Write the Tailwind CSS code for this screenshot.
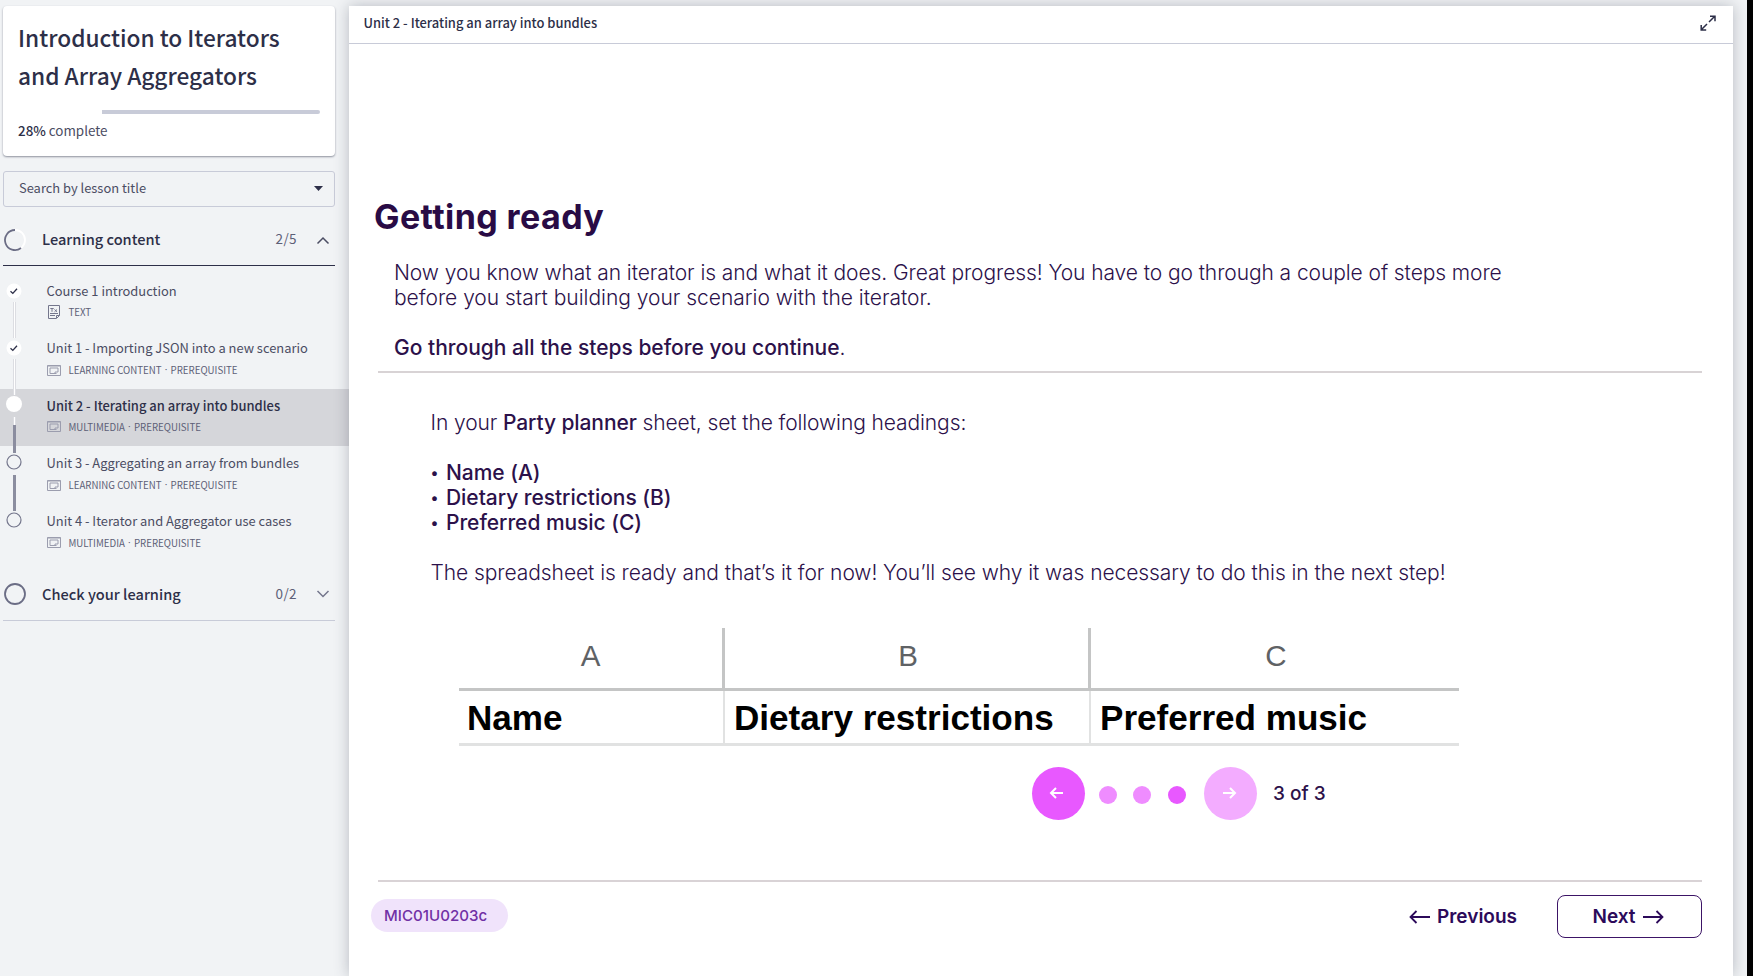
<!DOCTYPE html>
<html lang="en">
<head>
<meta charset="utf-8">
<title>Introduction to Iterators and Array Aggregators</title>
<script src="https://cdn.jsdelivr.net/npm/@tailwindcss/browser@4"></script>
</head>
<body class="flex h-[976px] w-[1753px] overflow-hidden bg-[#f1f3f5] font-['Noto_Sans_CJK_SC',sans-serif] text-[#2d2f48]">

<aside class="w-[349px] shrink-0 pt-1.5">
  <section class="ml-[3px] h-[150px] w-[332px] rounded-[4px] bg-white pt-[13px] pl-[15px] shadow-[0_1px_2px_rgba(60,65,85,0.55)]">
    <h1 class="text-[22.7px] leading-[38px] font-medium whitespace-nowrap">Introduction to Iterators<br>and Array Aggregators</h1>
    <div class="mt-[15px] ml-[84px] h-1 w-[218px] rounded-r-[2px] bg-[#c8cbd8]"></div>
    <p class="mt-1 text-[13.4px] leading-[24px] text-[#4b4d63]"><span class="font-medium text-[#2d2f48]">28%</span> complete</p>
  </section>

  <div class="mt-[15px] ml-[3px] flex h-9 w-[332px] items-center justify-between rounded-[3px] border border-[#c8cbd8] pr-[11px] pl-[15px] text-[12.9px] text-[#4b4d63]">
    <span class="-mt-[3px]">Search by lesson title</span>
    <svg class="-mt-0.5 h-[5px] w-[9px]" viewBox="0 0 9 5"><path d="M0 0h9L4.500 5z" fill="#2d2f48"/></svg>
  </div>

  <div class="mt-[7px] ml-[3px] flex h-[52px] w-[332px] items-center border-b border-[#2d2f48]">
    <svg class="h-6 w-6" viewBox="0 0 24 24" fill="none" stroke-width="1.800"><circle cx="12" cy="12" r="10" stroke="#fff"/><path d="M12 2A10 10 0 1 0 18 20" stroke="#6b6d85"/></svg>
    <span class="-mt-0.5 ml-[15px] text-[14.6px] font-medium">Learning content</span>
    <span class="-mt-0.5 ml-auto text-[13.5px] text-[#5d5f77] tracking-[0.4px]">2/5</span>
    <svg class="mr-[5px] ml-[19px] h-3 w-[14px]" viewBox="0 0 14 12" fill="none" stroke="#4b4d63" stroke-width="1.500"><path d="M1.500 9.500L7 4 12.500 9.500"/></svg>
  </div>

  <ul class="mt-2 text-[#4b4d63]">
    <li class="flex h-[57.400px]">
      <div class="flex w-7 flex-col items-center pt-[9px]">
        <svg class="h-4 w-4 shrink-0" viewBox="0 0 16 16"><circle cx="8" cy="8" r="7.500" fill="#fff"/><path d="M4.500 8.300l2.300 2.100 4.200-4.700" fill="none" stroke="#2d2f48" stroke-width="1.300"/></svg>
        <div class="mt-[3px] h-9 w-[3px] shrink-0 border-x border-[#dcdde2] bg-white"></div>
      </div>
      <div class="ml-[18.500px] pt-1.5">
        <p class="text-[12.9px] leading-[21px] whitespace-nowrap">Course 1 introduction</p>
        <p class="mt-[3px] flex h-4 items-center text-[9.7px] leading-4 text-[#5d5f77]"><svg class="mr-[9px] ml-px h-[14px] w-3" viewBox="0 0 12 14" fill="none" stroke="#74768c"><path d="M.5.500h11v10l-3 3h-8zM2 8.500h8M2 10.500h5M8.500 13v-2.500h3M2.300 3.500h3.400M4 3.500v3.300M6.500 4.500l2.500 2.300M9 4.500L6.500 6.800"/></svg>TEXT</p>
      </div>
    </li>
    <li class="flex h-[57.400px]">
      <div class="flex w-7 flex-col items-center pt-[9px]">
        <svg class="h-4 w-4 shrink-0" viewBox="0 0 16 16"><circle cx="8" cy="8" r="7.500" fill="#fff"/><path d="M4.500 8.300l2.300 2.100 4.200-4.700" fill="none" stroke="#2d2f48" stroke-width="1.300"/></svg>
        <div class="mt-[3px] h-9 w-[3px] shrink-0 border-x border-[#dcdde2] bg-white"></div>
      </div>
      <div class="ml-[18.500px] pt-1.5">
        <p class="text-[12.9px] leading-[21px] whitespace-nowrap">Unit 1 - Importing JSON into a new scenario</p>
        <p class="mt-1 flex h-4 items-center text-[9.7px] leading-4 text-[#5d5f77]"><svg class="mr-2 h-[11px] w-[14px]" viewBox="0 0 14 11" fill="none" stroke="#9b9dae"><path d="M.5.500h13v10H.500zM.5 1h13M9.500 8.500H3v-5.500h8v4M8 8.500v-1.500h3"/></svg>LEARNING CONTENT<span class="w-[9px] text-center font-['Noto_Sans',sans-serif]">·</span>PREREQUISITE</p>
      </div>
    </li>
    <li class="flex h-[57.400px] bg-[#d5d6da]">
      <div class="flex w-7 flex-col items-center pt-[7px]">
        <svg class="h-4 w-4 shrink-0" viewBox="0 0 16 16"><circle cx="8" cy="8" r="8" fill="#fff"/></svg>
        <div class="mt-[5px] h-2 w-[3px] shrink-0 border-x border-[#dcdde2] bg-white"></div>
        <div class="h-7 w-[3px] shrink-0 bg-[#8b8d9f]"></div>
      </div>
      <div class="ml-[18.500px] pt-1.5">
        <p class="text-[12.95px] leading-[21px] font-medium whitespace-nowrap text-[#2d2f48]">Unit 2 - Iterating an array into bundles</p>
        <p class="mt-[3px] flex h-4 items-center text-[9.7px] leading-4 text-[#5d5f77]"><svg class="mr-2 h-[11px] w-[14px]" viewBox="0 0 14 11" fill="none" stroke="#9b9dae"><path d="M.5.500h13v10H.500zM.5 1h13M9.500 8.500H3v-5.500h8v4M8 8.500v-1.500h3"/></svg>MULTIMEDIA<span class="w-[9px] text-center font-['Noto_Sans',sans-serif]">·</span>PREREQUISITE</p>
      </div>
    </li>
    <li class="flex h-[57.400px]">
      <div class="flex w-7 flex-col items-center pt-2">
        <svg class="h-4 w-4 shrink-0" viewBox="0 0 16 16"><circle cx="8" cy="8" r="7" fill="none" stroke="#74768c" stroke-width="1.200"/></svg>
        <div class="mt-[5px] h-9 w-[3px] shrink-0 bg-[#8b8d9f]"></div>
      </div>
      <div class="ml-[18.500px] pt-1.5">
        <p class="text-[12.9px] leading-[21px] whitespace-nowrap">Unit 3 - Aggregating an array from bundles</p>
        <p class="mt-1 flex h-4 items-center text-[9.7px] leading-4 text-[#5d5f77]"><svg class="mr-2 h-[11px] w-[14px]" viewBox="0 0 14 11" fill="none" stroke="#9b9dae"><path d="M.5.500h13v10H.500zM.5 1h13M9.500 8.500H3v-5.500h8v4M8 8.500v-1.500h3"/></svg>LEARNING CONTENT<span class="w-[9px] text-center font-['Noto_Sans',sans-serif]">·</span>PREREQUISITE</p>
      </div>
    </li>
    <li class="flex h-[57.400px]">
      <div class="flex w-7 flex-col items-center pt-2">
        <svg class="h-4 w-4 shrink-0" viewBox="0 0 16 16"><circle cx="8" cy="8" r="7" fill="none" stroke="#74768c" stroke-width="1.200"/></svg>
      </div>
      <div class="ml-[18.500px] pt-1.5">
        <p class="text-[12.9px] leading-[21px] whitespace-nowrap">Unit 4 - Iterator and Aggregator use cases</p>
        <p class="mt-1 flex h-4 items-center text-[9.7px] leading-4 text-[#5d5f77]"><svg class="mr-2 h-[11px] w-[14px]" viewBox="0 0 14 11" fill="none" stroke="#9b9dae"><path d="M.5.500h13v10H.500zM.5 1h13M9.500 8.500H3v-5.500h8v4M8 8.500v-1.500h3"/></svg>MULTIMEDIA<span class="w-[9px] text-center font-['Noto_Sans',sans-serif]">·</span>PREREQUISITE</p>
      </div>
    </li>
  </ul>

  <div class="mt-2 ml-[3px] flex h-[52px] w-[332px] items-center border-b border-[#c8cbd8]">
    <svg class="h-6 w-6" viewBox="0 0 24 24" fill="none" stroke-width="1.800"><circle cx="12" cy="12" r="10" stroke="#6b6d85"/></svg>
    <span class="-mt-0.5 ml-[15px] text-[14.6px] font-medium">Check your learning</span>
    <span class="-mt-0.5 ml-auto text-[13.5px] text-[#5d5f77] tracking-[0.4px]">0/2</span>
    <svg class="mr-[5px] ml-[19px] h-3 w-[14px]" viewBox="0 0 14 12" fill="none" stroke="#74768c" stroke-width="1.500"><path d="M1.500 3L7 8.500 12.500 3"/></svg>
  </div>
</aside>

<main class="mt-1.5 flex w-[1384px] shrink-0 flex-col bg-white shadow-[0_0_14px_rgba(60,65,85,0.32)]">
  <header class="flex h-[38px] items-center justify-between border-b border-[#c8cbd8] pr-[17px] pb-1 pl-[14.500px]">
    <span class="text-[12.95px] font-medium">Unit 2 - Iterating an array into bundles</span>
    <svg class="h-4 w-4" viewBox="0 0 16 16" fill="none" stroke="#2d2f48" stroke-width="1.500"><path d="M9 7l5.500-5.500M10 1.200h5v5M7 9l-5.500 5.500M1.200 10v5h5"/></svg>
  </header>

  <article class="h-[838px] pt-[148px] font-[Inter,sans-serif] text-[21px] leading-[25px] font-light text-[#2c114a]">
    <h2 class="ml-[25px] text-[34px] leading-[50px] font-bold tracking-[0.4px] text-[#290b45]">Getting ready</h2>
    <p class="mt-[18px] ml-[45px] whitespace-nowrap"><span class="tracking-[-0.08px]">Now you know what an iterator is and what it does. Great progress! You have to go through a couple of steps more</span><br><span class="tracking-[-0.02px]">before you start building your scenario with the iterator.</span></p>
    <p class="mt-[25px] ml-[45px] whitespace-nowrap"><b class="font-medium">Go through all the steps before you continue</b>.</p>
    <hr class="mt-[11px] ml-[29px] h-0.5 w-[1324px] border-0 bg-[#d8d3d5]">
    <div class="mt-[37px] ml-[81.500px] whitespace-nowrap">
      <p class="tracking-[-0.1px]">In your <b class="font-medium">Party planner</b> sheet, set the following headings:</p>
      <ul class="mt-[25px] font-medium tracking-[-0.04px]">
        <li class="flex"><span class="w-[15.500px] text-[15px]">•</span>Name (A)</li>
        <li class="flex"><span class="w-[15.500px] text-[15px]">•</span>Dietary restrictions (B)</li>
        <li class="flex"><span class="w-[15.500px] text-[15px]">•</span>Preferred music (C)</li>
      </ul>
      <p class="mt-[25px] tracking-[-0.07px]">The spreadsheet is ready and that’s it for now! You’ll see why it was necessary to do this in the next step!</p>
    </div>

    <div class="mt-[43px] ml-[110px] grid w-[1000px] grid-cols-[266px_366px_368px] font-['Liberation_Sans',sans-serif] text-[35.1px] font-bold text-black">
      <div class="flex h-[63px] items-center justify-center border-r-[3px] border-b-[3px] border-[#c4c5c5] pb-1.5 text-[29.5px] font-normal text-[#5f6265]">A</div>
      <div class="flex h-[63px] items-center justify-center border-r-[3px] border-b-[3px] border-[#c4c5c5] pb-1.5 pl-[3px] text-[29.5px] font-normal text-[#5f6265]">B</div>
      <div class="flex h-[63px] items-center justify-center border-b-[3px] border-[#c4c5c5] pb-1.5 pl-0.5 text-[29.5px] font-normal text-[#5f6265]">C</div>
      <div class="flex h-[55px] items-center border-r-2 border-b-[3px] border-[#e1e2e2] pl-2">Name</div>
      <div class="flex h-[55px] items-center border-r-2 border-b-[3px] border-[#e1e2e2] pl-[9px]">Dietary restrictions</div>
      <div class="flex h-[55px] items-center border-b-[3px] border-[#e1e2e2] pl-[9px]">Preferred music</div>
    </div>

    <nav class="mt-[21px] ml-[683px] flex items-center">
      <div class="flex size-[53px] items-center justify-center rounded-full bg-[#e858ff]"><svg class="-mt-px -ml-[5px] h-3 w-[14px]" viewBox="0 0 14 12" fill="none" stroke="#fff" stroke-width="2"><path d="M14 6H2M7 1L2 6l5 5"/></svg></div>
      <div class="mt-[3px] ml-[14px] size-[18px] rounded-full bg-[#ef8cff]"></div>
      <div class="mt-[3px] ml-4 size-[18px] rounded-full bg-[#ef8cff]"></div>
      <div class="mt-[3px] ml-[17px] size-[18px] rounded-full bg-[#e858ff]"></div>
      <div class="ml-[18px] flex size-[53px] items-center justify-center rounded-full bg-[#f3acff]"><svg class="-mt-px -ml-px h-3 w-[14px]" viewBox="0 0 14 12" fill="none" stroke="#fff" stroke-width="2"><path d="M0 6h12M7 1l5 5-5 5"/></svg></div>
      <span class="ml-4 text-[19px] font-medium">3 of 3</span>
    </nav>
    <hr class="mt-[60px] ml-[29px] h-0.5 w-[1324px] border-0 bg-[#d9d3d6]">
  </article>

  <footer class="ml-[22px] flex w-[1331px] items-center pt-[13px] font-[Inter,sans-serif] text-[19px] font-semibold text-[#2c0a5a]">
    <span class="-mt-0.5 flex h-[33px] w-[137px] items-center rounded-full bg-[#f0e3fb] pt-0.5 pl-[13px] text-[15.1px] font-medium text-[#7030a5]">MIC01U0203c</span>
    <span class="ml-auto flex items-center"><svg class="mr-[7px] h-3.5 w-[21px]" viewBox="0 0 21 14" fill="none" stroke="#2c0a5a" stroke-width="1.800"><path d="M21 7H1.500M7.500 1l-6 6 6 6"/></svg><span class="mt-px">Previous</span></span>
    <span class="ml-10 flex h-[43px] w-[145px] items-center justify-center rounded-lg border-[1.500px] border-[#3c1466] pr-[3px]"><span class="mt-px">Next</span><svg class="mt-px ml-[7px] h-3.5 w-[21px]" viewBox="0 0 21 14" fill="none" stroke="#2c0a5a" stroke-width="1.800"><path d="M0 7h19.500M13.500 1l6 6-6 6"/></svg></span>
  </footer>
</main>
<div class="ml-3.5 w-1.5 bg-black"></div>
</body>
</html>
